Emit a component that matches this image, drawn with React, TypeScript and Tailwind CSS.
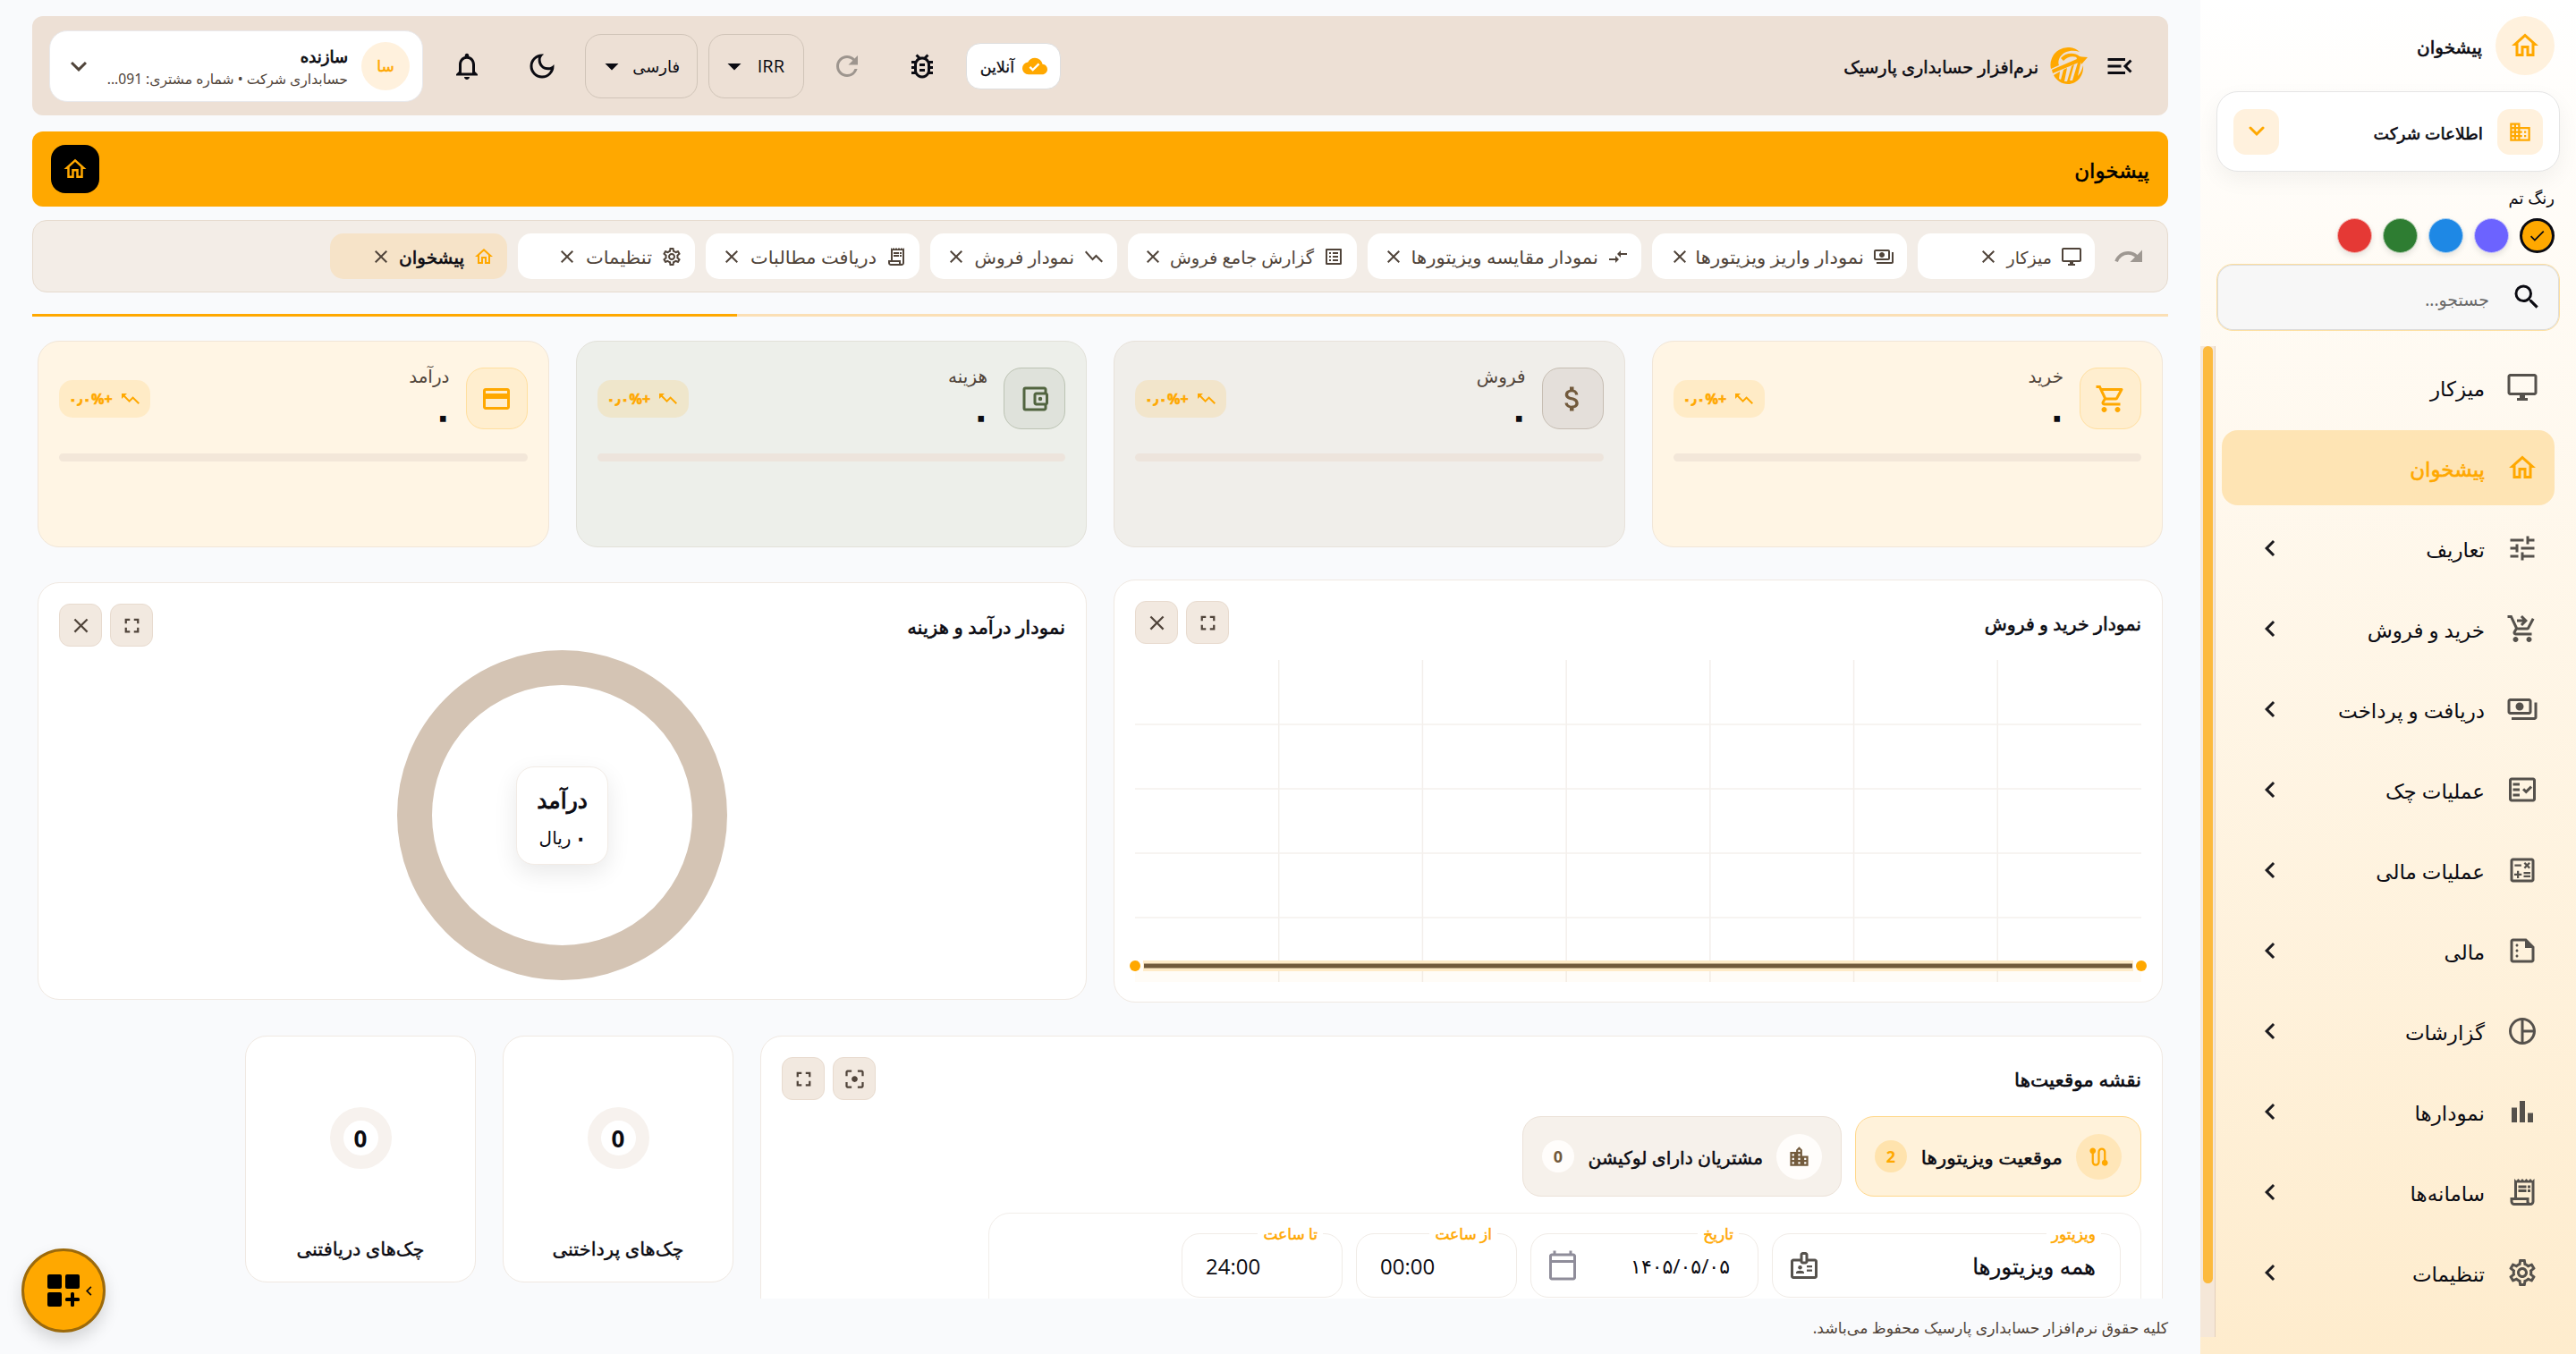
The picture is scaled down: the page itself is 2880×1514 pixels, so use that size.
import type { ReactNode } from 'react';
import type { IconType } from 'react-icons';
import {
  MdArrowDropDown,
  MdBarChart,
  MdBusiness,
  MdCheck,
  MdChevronLeft,
  MdClose,
  MdCloudDone,
  MdCompareArrows,
  MdExpandMore,
  MdFilterCenterFocus,
  MdFullscreen,
  MdLocationCity,
  MdMenuOpen,
  MdOutlineAccountBalanceWallet,
  MdOutlineAttachMoney,
  MdOutlineBadge,
  MdOutlineBugReport,
  MdOutlineCalculate,
  MdOutlineCalendarToday,
  MdOutlineCreditCard,
  MdOutlineDarkMode,
  MdOutlineDesktopWindows,
  MdOutlineFactCheck,
  MdOutlineHome,
  MdOutlineListAlt,
  MdOutlineNotifications,
  MdOutlinePayments,
  MdOutlinePieChartOutline,
  MdOutlineReceiptLong,
  MdOutlineSettings,
  MdOutlineShoppingCart,
  MdOutlineSummarize,
  MdRedo,
  MdRefresh,
  MdRoute,
  MdSearch,
  MdShoppingCartCheckout,
  MdShowChart,
  MdTrendingUp,
  MdTune,
} from 'react-icons/md';

const MENU: { label: string; icon: IconType; active?: boolean; leaf?: boolean }[] = [
  { label: 'میزکار', icon: MdOutlineDesktopWindows, leaf: true },
  { label: 'پیشخوان', icon: MdOutlineHome, leaf: true, active: true },
  { label: 'تعاریف', icon: MdTune },
  { label: 'خرید و فروش', icon: MdShoppingCartCheckout },
  { label: 'دریافت و پرداخت', icon: MdOutlinePayments },
  { label: 'عملیات چک', icon: MdOutlineFactCheck },
  { label: 'عملیات مالی', icon: MdOutlineCalculate },
  { label: 'مالی', icon: MdOutlineSummarize },
  { label: 'گزارشات', icon: MdOutlinePieChartOutline },
  { label: 'نمودارها', icon: MdBarChart },
  { label: 'سامانه‌ها', icon: MdOutlineReceiptLong },
  { label: 'تنظیمات', icon: MdOutlineSettings },
];

const TABS: { label: string; icon: IconType; width: string; text: string; flip?: boolean; active?: boolean }[] = [
  { label: 'میزکار', icon: MdOutlineDesktopWindows, width: 'w-[198px]', text: 'w-[50px] text-[19px]' },
  { label: 'نمودار واریز ویزیتورها', icon: MdOutlinePayments, width: 'w-[285px]', text: 'w-[176px] text-[20px] scale-x-[1.06] ml-[9px]' },
  { label: 'نمودار مقایسه ویزیتورها', icon: MdCompareArrows, width: 'w-[306px]', text: 'w-[197px] text-[20px] scale-x-[1.06] ml-[11px]' },
  { label: 'گزارش جامع فروش', icon: MdOutlineListAlt, width: 'w-[256px]', text: 'w-[159px] text-[19.5px]' },
  { label: 'نمودار فروش', icon: MdShowChart, width: 'w-[209px]', text: 'w-[111px] text-[20px]', flip: true },
  { label: 'دریافت مطالبات', icon: MdOutlineReceiptLong, width: 'w-[239px]', text: 'w-[136px] text-[20px] scale-x-[1.045] ml-[5px]' },
  { label: 'تنظیمات', icon: MdOutlineSettings, width: 'w-[198px]', text: 'w-[70px] text-[20px] scale-x-[1.05] ml-[4px]' },
  { label: 'پیشخوان', icon: MdOutlineHome, width: 'w-[198px]', text: 'w-[72px] text-[20px]', active: true },
];

const STATS: { label: string; icon: IconType; card: string; box: string; bar: string }[] = [
  {
    label: 'خرید',
    icon: MdOutlineShoppingCart,
    card: 'bg-[#fff5e4] border-[#f1e6d8]',
    box: 'bg-[#ffeecf] border-[#ffdf9f] text-[#ffa800]',
    bar: 'bg-[#f3e7d9]',
  },
  {
    label: 'فروش',
    icon: MdOutlineAttachMoney,
    card: 'bg-[#f0eeea] border-[#e8e2da]',
    box: 'bg-[#e4dfda] border-[#c6bdb2] text-[#725a3c]',
    bar: 'bg-[#ede4dc]',
  },
  {
    label: 'هزینه',
    icon: MdOutlineAccountBalanceWallet,
    card: 'bg-[#edefea] border-[#e2e1d9]',
    box: 'bg-[#dfe2db] border-[#bcc3b3] text-[#51643f]',
    bar: 'bg-[#ede4dc]',
  },
  {
    label: 'درآمد',
    icon: MdOutlineCreditCard,
    card: 'bg-[#fff5e4] border-[#f1e6d8]',
    box: 'bg-[#ffeecf] border-[#ffdf9f] text-[#ffa800]',
    bar: 'bg-[#f3e7d9]',
  },
];

const THEME_COLORS = ['bg-[#6c63ff]', 'bg-[#1e88e5]', 'bg-[#2e7d32]', 'bg-[#e53935]'];
const THEME_RINGS = ['border-[#c9c6fb]', 'border-[#abd2f2]', 'border-[#b0ceae]', 'border-[#f5b5b0]'];

function Logo() {
  return (
    <svg viewBox="0 0 42 41" className="h-[41px] w-[42px]" fill="none">
      <path d="M1 24A19.5 19.5 0 0 1 33 5c-8-3-18-1-22 6-2 4-2 7-1 9L1 24Z" fill="#ffa800" />
      <path d="M12 12C17 6 27 5 33 10l4 2-3 1C28 9 20 9 15 15Z" fill="#ffa800" />
      <path d="M2 25 30 13l-1-3 13 1-7 8-1-3C24 20 13 25 3 29Z" fill="#ffa800" />
      <path
        d="M4 31l7-4-1 8 2 1 3-11 4-2-3 15h3l5-17 3-2-5 18h3l6-20 4-3-4 18c3-3 5-8 6-12C38 31 31 41 20 41 13 41 7 37 4 31Z"
        fill="#ffa800"
      />
    </svg>
  );
}

function IconButton({ children }: { children: ReactNode }) {
  return (
    <div className="flex size-12 items-center justify-center rounded-xl border border-[#e8dbcf] bg-[#f2e9e0] text-[#50443a]">
      {children}
    </div>
  );
}

function Sidebar() {
  return (
    <aside className="flex h-full w-[420px] shrink-0 flex-col bg-linear-to-b from-white to-[#feeccd]">
      <div className="flex h-[84px] items-end gap-[15px] pr-6">
        <div className="flex size-[66px] items-center justify-center rounded-full bg-[#fff1dd]">
          <MdOutlineHome className="size-9 text-[#ffa800]" />
        </div>
        <div className="flex h-[66px] items-center pt-[3px] text-[20px] [-webkit-text-stroke:0.6px]">پیشخوان</div>
      </div>

      <div className="mx-[18px] mt-[18px] flex h-[90px] items-center rounded-3xl border border-[#e5e5e5] bg-white px-[18px] shadow-[0_9px_24px_rgba(0,0,0,0.05)]">
        <div className="flex size-[51px] items-center justify-center rounded-[14px] bg-[#fff1dd]">
          <MdBusiness className="size-[27px] text-[#ffa800]" />
        </div>
        <div className="mr-4 flex-1 pt-[3px] text-[18.5px] [-webkit-text-stroke:0.6px]">اطلاعات شرکت</div>
        <div className="flex size-[51px] items-center justify-center rounded-[14px] bg-[#fff1dd]">
          <svg viewBox="0 0 18 12" className="h-3 w-[18px]" fill="none" stroke="#ffa800" strokeWidth="3" strokeLinecap="round">
            <path d="M2 2l7 7 7-7" />
          </svg>
        </div>
      </div>

      <div className="mt-[15px] pr-6 text-[18px] leading-[28px]">رنگ تم</div>
      <div className="mt-[9px] flex gap-3 pr-6">
        <div className="flex size-[39px] items-center justify-center rounded-full border-3 border-[#0b0b12] bg-[#ffa800]">
          <MdCheck className="size-[21px]" />
        </div>
        {THEME_COLORS.map((c, i) => (
          <div key={c} className={`size-[39px] rounded-full border-[1.5px] shadow-[0_3px_6px_rgba(0,0,0,0.1)] ${c} ${THEME_RINGS[i]}`} />
        ))}
      </div>

      <div className="mx-[18px] mt-3 flex h-[75px] items-center rounded-[18px] border border-[#fddfa0] bg-[#f7f7f7] pr-[18px] inset-ring inset-ring-[#dcdcdc]">
        <MdSearch className="size-9 -translate-y-[1px]" />
        <span className="mr-6 pt-[6px] text-[19px] text-[#6a6a6a]">جستجو...</span>
      </div>

      <div className="mt-[17px] flex h-[1108px]">
        <nav className="flex flex-1 flex-col gap-1.5 pt-1 pr-6 pl-[7px]">
          {MENU.map((m) => (
            <div
              key={m.label}
              className={`flex h-[84px] items-center rounded-[18px] pr-[18px] pl-9 ${m.active ? 'bg-[#fee4b4] text-[#ffa800]' : ''}`}
            >
              <m.icon className={`size-9 shrink-0 ${m.active ? 'text-[#ffa800]' : 'text-[#55514c]'}`} />
              <span className={`mr-6 flex-1 pt-[3px] whitespace-nowrap text-[23px] ${m.active ? '[-webkit-text-stroke:0.6px]' : ''}`}>{m.label}</span>
              {!m.leaf && <MdChevronLeft className="size-9 text-[#1c1b1f]" />}
            </div>
          ))}
        </nav>
        <div className="w-[17px] shrink-0 border-r border-[#e3d0bd] bg-[#f5e7d8] pr-[2px] pl-[3px]">
          <div className="h-[1048px] rounded-full bg-[#fcba3e]" />
        </div>
      </div>
    </aside>
  );
}

function TopBar() {
  return (
    <header className="flex h-[111px] shrink-0 items-center rounded-xl bg-[#ede0d5] pr-9 pl-[19px]">
      <MdMenuOpen className="size-9" />
      <div className="mr-[18px]">
        <Logo />
      </div>
      <div className="mr-[13px] pt-[3px] text-[19.3px] [-webkit-text-stroke:0.5px]">نرم‌افزار حسابداری پارسیک</div>

      <div className="mr-auto flex items-center">
        <div className="flex h-[52px] w-[106px] items-center rounded-2xl border border-[#dedede] bg-white pr-3.5">
          <MdCloudDone className="size-7 text-[#ffa800]" />
          <span className="mr-[9px] pt-[2px] text-[17.5px] [-webkit-text-stroke:0.3px]">آنلاین</span>
        </div>
        <MdOutlineBugReport className="mr-[31px] size-9" />
        <MdRefresh className="mr-[48px] size-9 text-[#9d958e]" />
        <div className="mr-[30px] flex h-[72px] w-[107px] items-center rounded-[18px] border border-[#d0c4b8] pr-[21px]">
          <span className="w-[30px] font-['Open_Sans'] text-[20px] leading-none">IRR</span>
          <MdArrowDropDown className="mr-[8px] size-9" />
        </div>
        <div className="mr-3 flex h-[72px] w-[126px] items-center rounded-[18px] border border-[#d0c4b8] pr-[19px]">
          <span className="w-[51px] pt-[2px] text-[18px]">فارسی</span>
          <MdArrowDropDown className="mr-[7px] size-9" />
        </div>
        <MdOutlineDarkMode className="mr-[30px] size-9" />
        <MdOutlineNotifications className="mr-12 size-9" />
        <div className="mr-[31px] flex h-[80px] w-[418px] items-center rounded-[20px] border border-[#e9e9ec] bg-white pr-3.5 pl-3.5">
          <div className="flex size-[54px] shrink-0 items-center justify-center rounded-full bg-[#fff1dd] text-[17px] text-[#ffa800] [-webkit-text-stroke:0.5px]">
            سا
          </div>
          <div className="mr-[15px] flex flex-1 flex-col pt-[3px]">
            <span className="text-[18px] leading-[26px] [-webkit-text-stroke:0.8px]">سازنده</span>
            <span className="whitespace-nowrap text-[15.6px] leading-[24px] text-[#50443a]">حسابداری شرکت • شماره مشتری: 091...</span>
          </div>
          <MdExpandMore className="size-9 text-[#50443a]" />
        </div>
      </div>
    </header>
  );
}

function TabStrip() {
  return (
    <div className="mt-[15px] flex h-[81px] shrink-0 items-center rounded-2xl border border-[#e6dbcf] bg-[#f3ede7] pr-[25px]">
      <MdRedo className="size-9 text-[#9e9892]" />
      <div className="mr-[20px] flex gap-3">
        {TABS.map((t) => (
          <div
            key={t.label}
            className={`flex h-[51px] items-center rounded-[15px] pr-[14px] text-[#50443a] ${t.width} ${t.active ? 'bg-[#f6e3c8]' : 'bg-white'}`}
          >
            <t.icon className={`size-6 shrink-0 ${t.active ? 'text-[#ffa800]' : ''} ${t.flip ? '-scale-x-100' : ''}`} />
            <span
              className={`mr-[10px] shrink-0 origin-right pt-[3px] whitespace-nowrap ${t.text} ${t.active ? 'text-[#0b0b12] [-webkit-text-stroke:0.6px]' : ''}`}
            >
              {t.label}
            </span>
            <MdClose className="mr-[9px] size-6 shrink-0" />
          </div>
        ))}
      </div>
    </div>
  );
}

function StatCards() {
  return (
    <div className="grid grid-cols-4 gap-[30px]">
      {STATS.map((s) => (
        <div key={s.label} className={`h-[231px] rounded-3xl border px-[23px] pt-[29px] ${s.card}`}>
          <div className="flex h-[69px] items-center">
            <div className={`flex size-[69px] items-center justify-center rounded-[20px] border ${s.box}`}>
              <s.icon className="size-9" />
            </div>
            <div className="mr-[18px] flex-1">
              <div className="text-[20px] leading-[24px] text-[#50443a]">{s.label}</div>
              <div className="mt-[15px] text-[27px] leading-[35px] [-webkit-text-stroke:3.5px] [stroke-linejoin:round]">۰</div>
            </div>
            <div className="flex h-[42px] w-[102px] items-center justify-center gap-2 rounded-[15px] bg-[#ffa800]/13 text-[#ffa800]">
              <MdTrendingUp className="size-6 -scale-x-100" />
              <span dir="ltr" className="text-[16px] font-bold [-webkit-text-stroke:0.6px]">۰٫۰%+</span>
            </div>
          </div>
          <div className={`mt-[27px] h-[9px] rounded-full ${s.bar}`} />
        </div>
      ))}
    </div>
  );
}

function TradeChart() {
  // the plot is 1125 x 360, 7 columns by 5 rows
  return (
    <div className="flex h-[473px] flex-col rounded-3xl border border-[#f0e9e2] bg-white px-[23px] pt-[23px]">
      <div className="flex items-center justify-between">
        <h3 className="pt-[2px] text-[20.5px] [-webkit-text-stroke:0.6px]">نمودار خرید و فروش</h3>
        <div className="flex gap-[9px]">
          <IconButton><MdFullscreen className="size-[27px]" /></IconButton>
          <IconButton><MdClose className="size-[27px]" /></IconButton>
        </div>
      </div>
      <svg viewBox="0 0 1125 360" className="mt-[18px] h-[360px] w-[1125px] overflow-visible">
        {[1, 2, 3, 4, 5, 6].map((i) => (
          <line key={i} x1={(i * 1125) / 7} x2={(i * 1125) / 7} y1="0" y2="360" stroke="#f3efeb" strokeWidth="1.5" />
        ))}
        {[72, 144, 216, 288].map((y) => (
          <line key={y} x1="0" x2="1125" y1={y} y2={y} stroke="#f5f0ec" strokeWidth="1.5" />
        ))}
        <rect x="0" y="342" width="1125" height="18" fill="#ffa800" opacity="0.03" />
        <rect x="9" y="336" width="1107" height="12" fill="#ffebc8" />
        <rect x="10" y="339.5" width="1105" height="5" fill="#725a3c" />
        <circle cx="0" cy="342" r="6" fill="#ffa800" />
        <circle cx="1125" cy="342" r="6" fill="#ffa800" />
      </svg>
    </div>
  );
}

function IncomeChart() {
  return (
    <div className="mt-[3px] h-[467px] rounded-3xl border border-[#f0e9e2] bg-white px-[23px] pt-[23px]">
      <div className="flex items-center justify-between">
        <h3 className="pt-[3px] text-[21.3px] [-webkit-text-stroke:0.6px]">نمودار درآمد و هزینه</h3>
        <div className="flex gap-[9px]">
          <IconButton><MdFullscreen className="size-[27px]" /></IconButton>
          <IconButton><MdClose className="size-[27px]" /></IconButton>
        </div>
      </div>
      <div className="mx-auto mt-[4px] flex size-[369px] items-center justify-center rounded-full border-[39px] border-[#d4c4b4]">
        <div className="flex h-[110px] w-[103px] flex-col items-center justify-center rounded-[20px] border border-[#f2ece6] bg-white pt-[6px] shadow-[0_9px_27px_rgba(0,0,0,0.09)]">
          <span className="text-[25px] leading-[44px] [-webkit-text-stroke:0.9px]">درآمد</span>
          <span className="text-[20px] leading-[42px]">
            <span className="[-webkit-text-stroke:1.5px]">۰</span> ریال
          </span>
        </div>
      </div>
    </div>
  );
}

function Field({ label, width, children }: { label: string; width: string; children: ReactNode }) {
  return (
    <div className={`relative flex h-[72px] items-center rounded-[20px] border border-[#f0ebe6] ${width}`}>
      <span className="absolute -top-[13px] right-[21px] bg-white px-1.5 text-[17px] leading-[26px] text-[#ffa800] [-webkit-text-stroke:0.5px]">
        {label}
      </span>
      {children}
    </div>
  );
}

function MapCard() {
  return (
    <div className="h-[420px] w-[1568px] shrink-0 rounded-3xl border border-[#f0e9e2] bg-white px-[23px] pt-[23px]">
      <div className="flex items-center justify-between">
        <h3 className="pt-[2px] text-[21.5px] [-webkit-text-stroke:0.6px]">نقشه موقعیت‌ها</h3>
        <div className="flex gap-[9px]">
          <IconButton><MdFilterCenterFocus className="size-[27px]" /></IconButton>
          <IconButton><MdFullscreen className="size-[27px]" /></IconButton>
        </div>
      </div>

      <div className="mt-[18px] flex gap-[15px]">
        <div className="flex h-[90px] w-[320px] items-center rounded-[21px] border-[1.5px] border-[#ffd88c] bg-[#fff2da] px-[21px]">
          <div className="flex size-[51px] items-center justify-center rounded-full bg-[#ffe6b8]">
            <MdRoute className="size-[27px] text-[#ffa800]" />
          </div>
          <span className="mr-[15px] flex-1 origin-right scale-x-[1.06] pt-[3px] whitespace-nowrap text-[20.5px] [-webkit-text-stroke:0.5px]">موقعیت ویزیتورها</span>
          <span className="flex size-9 items-center justify-center rounded-full bg-[#ffe3ad] text-[18px] font-bold text-[#ffa800]">2</span>
        </div>
        <div className="flex h-[90px] w-[357px] items-center rounded-[21px] border border-[#ece2d8] bg-[#f6f1eb] px-[21px]">
          <div className="flex size-[51px] items-center justify-center rounded-full bg-[#fffdfb]">
            <MdLocationCity className="size-[27px] text-[#725a3c]" />
          </div>
          <span className="mr-[15px] flex-1 pt-[3px] whitespace-nowrap text-[20.3px] [-webkit-text-stroke:0.5px]">مشتریان دارای لوکیشن</span>
          <span className="flex size-9 items-center justify-center rounded-full bg-[#fffdfb] text-[18px] font-bold text-[#725a3c]">0</span>
        </div>
      </div>

      <div className="mt-[18px] flex h-[180px] w-[1289px] gap-[15px] rounded-3xl border border-[#f2eeea] px-[22px] pt-[22px]">
        <Field label="ویزیتور" width="w-[390px]">
          <span className="mr-[27px] flex-1 pt-[2px] text-[24.5px] [-webkit-text-stroke:0.3px]">همه ویزیتورها</span>
          <MdOutlineBadge className="ml-[17px] size-9 text-[#55514c]" />
        </Field>
        <Field label="تاریخ" width="w-[255px]">
          <span dir="ltr" className="mr-[31px] text-[22px]">۱۴۰۵/۰۵/۰۵</span>
          <MdOutlineCalendarToday className="mr-auto ml-[17px] size-9 text-[#8f8d9a]" />
        </Field>
        <Field label="از ساعت" width="w-[180px]">
          <span className="mr-auto ml-[26px] pt-[2px] font-['Open_Sans'] text-[24px]">00:00</span>
        </Field>
        <Field label="تا ساعت" width="w-[180px]">
          <span className="mr-auto ml-[26px] pt-[2px] font-['Open_Sans'] text-[24px]">24:00</span>
        </Field>
      </div>
    </div>
  );
}

function CheckCard({ label }: { label: string }) {
  return (
    <div className="flex h-[276px] w-[258px] shrink-0 flex-col items-center rounded-3xl border border-[#f0e9e2] bg-white pt-[79px]">
      <div className="flex size-[69px] items-center justify-center rounded-full border-[15px] border-[#f7f2ee]">
        <span className="text-[26px] leading-none font-bold">0</span>
      </div>
      <div className="mt-[72px] whitespace-nowrap text-[21px] leading-[34px] [-webkit-text-stroke:0.4px]">{label}</div>
    </div>
  );
}

export default function App() {
  return (
    <div
      dir="rtl"
      className="relative flex h-[1514px] w-[2880px] overflow-hidden bg-[#f9fafc] font-['Noto_Sans','DejaVu_Sans',sans-serif] text-[#0b0b12]"
    >
      <Sidebar />
      <div className="flex min-w-0 flex-1 flex-col px-9 pt-[18px]">
        <TopBar />

        <div className="mt-[18px] flex h-[84px] shrink-0 items-center justify-between rounded-xl bg-[#ffa800] px-[21px]">
          <h1 className="pt-[2px] text-[23px] text-black [-webkit-text-stroke:0.5px]">پیشخوان</h1>
          <div className="flex size-[54px] items-center justify-center rounded-2xl bg-black">
            <MdOutlineHome className="size-[30px] text-[#ffa800]" />
          </div>
        </div>

        <TabStrip />

        <div className="mt-6 flex h-[3px] shrink-0 justify-end bg-[#fbdfb5]">
          <div className="w-[788px] bg-[#ffa800]" />
        </div>

        <main className="h-[1098px] shrink-0 overflow-hidden px-1.5 pt-[27px]">
          <StatCards />
          <div className="mt-9 grid grid-cols-2 gap-[30px]">
            <TradeChart />
            <IncomeChart />
          </div>
          <div className="mt-[37px] flex gap-[30px]">
            <MapCard />
            <CheckCard label="چک‌های پرداختنی" />
            <CheckCard label="چک‌های دریافتنی" />
          </div>
        </main>

        <footer className="mt-[18px] text-[17.2px] leading-[30px] text-[#50443a]">
          کلیه حقوق نرم‌افزار حسابداری پارسیک محفوظ می‌باشد.
        </footer>
      </div>

      {/* floating quick access button */}
      <div className="absolute bottom-6 left-6 flex size-[94px] items-center justify-center rounded-full border-3 border-[#9c6a0c] bg-[#ffa800] shadow-[0_9px_18px_rgba(0,0,0,0.15)]">
        <svg viewBox="0 0 36 36" className="size-9 fill-black">
          <rect x="0" y="0" width="16" height="16" rx="2" />
          <rect x="20" y="0" width="16" height="16" rx="2" />
          <rect x="0" y="20" width="16" height="16" rx="2" />
          <rect x="26" y="20" width="4" height="16" rx="1.5" />
          <rect x="20" y="26" width="16" height="4" rx="1.5" />
        </svg>
        <MdChevronLeft className="absolute right-[5px] size-[21px]" />
      </div>
    </div>
  );
}
